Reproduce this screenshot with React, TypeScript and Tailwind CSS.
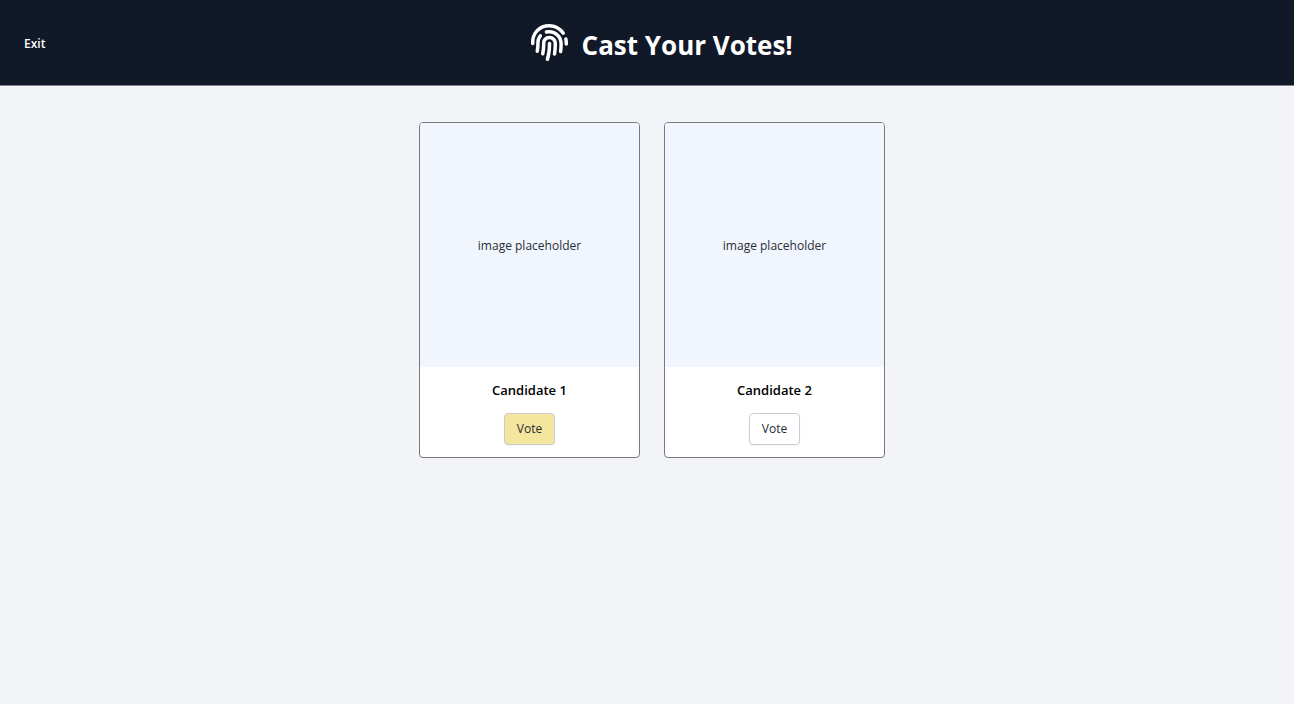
import { useState } from "react";
import { FaFingerprint } from "react-icons/fa";

const candidates = ["Candidate 1", "Candidate 2"];

function Header() {
  return (
    <header className="flex items-center border-b border-[#7d8190] bg-[#111827] px-6 py-6 text-white">
      <a href="#exit" className="pt-0.5 text-[12px] font-semibold leading-5">
        Exit
      </a>
      <div className="flex flex-1 items-center justify-center gap-3.5 pl-2">
        <FaFingerprint className="size-[37px]" aria-hidden="true" />
        <h1 className="pt-1 text-[26px] font-bold leading-8">Cast Your Votes!</h1>
      </div>
    </header>
  );
}

type CandidateCardProps = {
  name: string;
  selected: boolean;
  onVote: () => void;
};

function CandidateCard({ name, selected, onVote }: CandidateCardProps) {
  return (
    <article className="flex w-[221px] flex-col items-center overflow-hidden rounded border border-[#77797f] bg-white pb-3">
      <div className="flex h-[244px] w-full items-center justify-center bg-[#f0f5fe] pt-0.5 text-[12px] text-[#2b2d33]">
        image placeholder
      </div>
      <h2 className="py-[11px] text-[13px] font-semibold leading-6 text-black">{name}</h2>
      <button
        type="button"
        aria-pressed={selected}
        onClick={onVote}
        className={`rounded-sm border border-[#c9cad3] px-3 py-1.5 text-[12px] font-medium leading-[18px] text-[#1f2937] shadow-xs ${
          selected ? "bg-[#f5e69e]" : "bg-white"
        }`}
      >
        Vote
      </button>
    </article>
  );
}

export default function App() {
  const [selected, setSelected] = useState(candidates[0]);

  return (
    <div className="min-h-screen bg-[#f3f4f8] font-['Open_Sans','Noto_Sans',sans-serif]">
      <Header />
      <main className="flex flex-wrap justify-center gap-6 py-9 pl-2.5">
        {candidates.map((name) => (
          <CandidateCard
            key={name}
            name={name}
            selected={selected === name}
            onVote={() => setSelected(name)}
          />
        ))}
      </main>
    </div>
  );
}
